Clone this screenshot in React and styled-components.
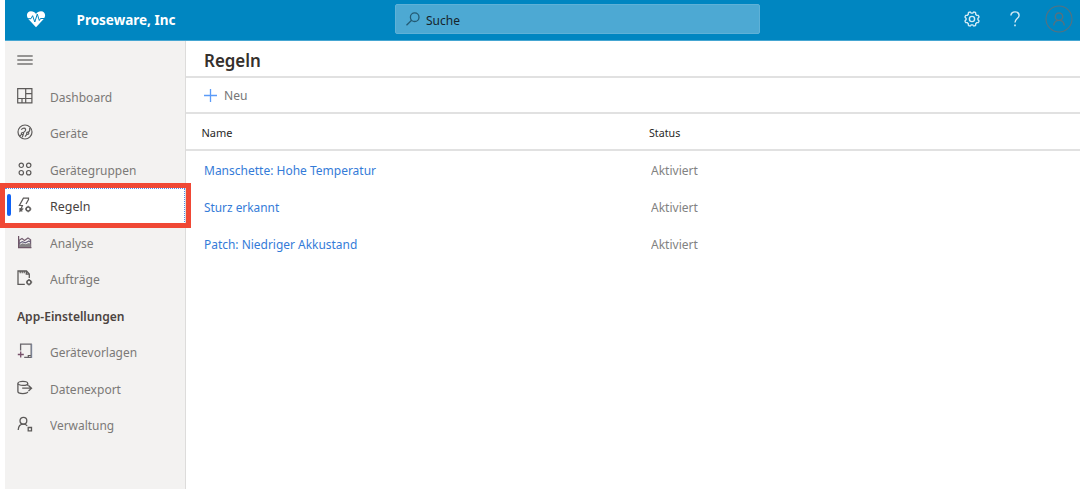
import React from "react";
import styled, { createGlobalStyle } from "styled-components";

const GlobalStyle = createGlobalStyle`
  * { box-sizing: border-box; }
  body {
    margin: 0;
    background: #fff;
    overflow: hidden;
    font-family: "Noto Sans", "Open Sans", sans-serif;
    font-size: 13px;
  }
`;

const Page = styled.div`
  position: relative;
  display: flex;
  flex-direction: column;
  height: 489px;
  padding-left: 5px;
`;

const Header = styled.header`
  display: flex;
  align-items: center;
  height: 41px;
  flex: none;
  padding-left: 21px;
  background: #0086c1;
  border-bottom: 1px solid #45a6d2;
`;

const Brand = styled.div`
  width: 319px;
  margin-left: 30.5px;
  color: #fff;
  font-size: 13.5px;
  font-weight: 700;
  white-space: nowrap;
`;

const SearchBox = styled.div`
  display: flex;
  align-items: center;
  width: 365px;
  height: 30px;
  margin: -3px 0 0 -0.5px;
  padding-left: 10px;
  gap: 6px;
  border: 1px solid #5fb1d7;
  border-radius: 2px;
  background: #4da9d3;
  color: #16242b;
  font-size: 12.5px;
`;

const SearchText = styled.span`
  display: inline-block;
  padding-top: 3px;
  transform: scaleX(0.96);
  transform-origin: left center;
`;

const HeaderActions = styled.div`
  display: flex;
  align-items: center;
  margin: -2px 0 0 204px;
`;

const Action = styled.span`
  display: flex;
  margin-right: ${(p) => p.$gap || 0}px;
`;

const Body = styled.div`
  display: flex;
  flex: 1;
  min-height: 0;
`;

const Sidebar = styled.nav`
  display: flex;
  flex-direction: column;
  width: 181px;
  flex: none;
  background: #f3f2f1;
  border-right: 1px solid #dddcdb;
`;

const MenuButton = styled.div`
  display: flex;
  align-items: center;
  height: 37.5px;
  flex: none;
  padding-left: 12px;
`;

const NavItem = styled.div`
  position: relative;
  display: flex;
  align-items: center;
  height: 36.5px;
  flex: none;
  padding-left: 12px;
  gap: 17px;
  color: ${(p) => (p.$active ? "#48423f" : "#7b7977")};
  background: ${(p) => (p.$active ? "#fff" : "transparent")};
`;

const FocusRing = styled.span`
  position: absolute;
  inset: 0 0 1px 0;
  border: 1px dotted #4a8cf0;
  border-left: none;
`;

const ActiveMark = styled.span`
  position: absolute;
  left: 2px;
  top: 6px;
  width: 4px;
  height: 22px;
  border-radius: 2px;
  background: #0f62f5;
`;

const Label = styled.span`
  display: inline-block;
  transform: scaleX(${(p) => p.$scale || 0.925});
  transform-origin: left center;
  white-space: nowrap;
`;

const NavIcon = styled.span`
  display: flex;
  margin-top: -2px;
`;

const SectionTitle = styled.div`
  display: flex;
  align-items: center;
  height: 36.5px;
  flex: none;
  padding-left: 12px;
  color: #4c4441;
  font-weight: 600;
`;

const Main = styled.main`
  display: flex;
  flex-direction: column;
  flex: 1;
`;

const TitleBar = styled.h1`
  display: flex;
  align-items: center;
  height: 37px;
  margin: 0;
  padding: 2px 0 0 18px;
  border-bottom: 2px solid #e1e1e1;
  color: #35302c;
  font-size: 18px;
  font-weight: 600;
`;

const Toolbar = styled.div`
  display: flex;
  align-items: center;
  height: 36px;
  padding-left: 18px;
  gap: 7px;
  border-bottom: 2px solid #e1e1e1;
  color: #767676;
`;

const TableHead = styled.div`
  display: grid;
  grid-template-columns: 447px 1fr;
  align-items: center;
  height: 37px;
  padding: 2px 0 0 15.5px;
  border-bottom: 2px solid #e1e1e1;
  color: #292827;
  font-size: 11px;
`;

const TableRow = styled.div`
  display: grid;
  grid-template-columns: 447px 1fr;
  align-items: center;
  justify-items: start;
  height: 37px;
  padding: 0 0 0 18px;
  color: #828282;
`;

const RuleLink = styled(Label)`
  color: #347bd8;
`;

const Highlight = styled.div`
  position: absolute;
  left: 0;
  top: 183px;
  width: 191px;
  height: 45px;
  border: 5px solid #f04835;
`;

const Svg = styled.svg`
  flex: none;
`;

const Icon = ({ size = 16, color = "#5c5a59", sw = 1.2, children }) => (
  <Svg width={size} height={size} viewBox={`0 0 ${size} ${size}`} fill="none" stroke={color} strokeWidth={sw}>
    {children}
  </Svg>
);

const icons = {
  dashboard: <path d="M.7.7h14.2v14.2H.7zM8.7.7v14.2M.7 10.5h14.2M8.7 5.6h6.2M5 10.5v4.4" />,
  devices: (
    <>
      <circle cx="8" cy="8" r="7" />
      <path d="M2.6 12.4 4.8 10.2M6.2 8.9 8 7.2c1.2-1.3.6-3-1-3-1.200 0-1.900.6-2.800 1.500M6.200 10.800l-1 2.600M8 12.600l2-2.400M11.300 8.400c1.500-1.300 1.900-2.700 1.300-4.400" />
      <circle cx="5.500" cy="9.600" r="1.100" />
      <circle cx="10.700" cy="9.300" r="1.100" />
    </>
  ),
  groups: (
    <>
      <circle cx="4.300" cy="4.300" r="2.200" />
      <circle cx="11.700" cy="4.300" r="2.200" />
      <circle cx="4.300" cy="11.700" r="2.200" />
      <circle cx="11.700" cy="11.700" r="2.200" />
    </>
  ),
  rules: (
    <>
      <path d="M9 7 11.500 2.500V1.200H6.400L2.400 8.500h3L3.300 13.800l3-2.300M3 11v3h2.500" />
      <circle cx="11.200" cy="12" r="2" strokeWidth="1.500" />
      <path d="M11.200 8.800v1M11.200 14.200v1M8 12h1M13.400 12h1" />
    </>
  ),
  analytics: (
    <>
      <path d="M1.600 2v11.600h12.800" stroke="#6b5365" />
      <path d="M2.200 6.200 5 4.500l2.500 2L11 4l2.600 1.800v7H2.200z" stroke="#755f70" />
      <path d="M2.300 11 5.500 9.200 8.500 10.200 12 9l1.700 1v3H2.300z" fill="#858386" stroke="none" />
      <path d="m2.300 9.600 3-2 3 1.300L12 7l1.700 1.300" stroke="#67607d" />
    </>
  ),
  jobs: (
    <>
      <path d="M7.800 14.300H1V1h8.500l2.800 3v4M9.300 1v3.200h3" strokeWidth="1.300" />
      <path d="M3.200 1v2.200M5.200 1v2.200M7.200 1v2.200" />
      <circle cx="12" cy="12.200" r="2" strokeWidth="1.500" />
      <path d="M12 9v1M12 14.400v1M9 12.200h.8M14.200 12.200h1" />
    </>
  ),
  templates: (
    <>
      <path d="M3.600 7.500V1.200h10.600v13.200H7.200" stroke="#69656b" strokeWidth="1.300" />
      <path d="M.8 11.500h6M3.700 8.500v6" stroke="#77516a" strokeWidth="1.300" />
      <path d="M11.300 14.300v-1.800h2.600" />
      <path d="M14.800 1v14" stroke="#7b8fae" strokeWidth=".6" />
    </>
  ),
  exportData: (
    <>
      <ellipse cx="5.800" cy="3.400" rx="4.900" ry="2" />
      <path d="M.9 3.400v8.200c0 1.200 2.200 2 4.900 2s4.900-.8 4.900-1.800M10.700 3.400v2.400M5.200 8.200h9M11.500 5.500l3 2.700-3 2.700" strokeWidth="1.300" />
    </>
  ),
  admin: (
    <>
      <circle cx="6.400" cy="4.700" r="3.400" strokeWidth="1.300" />
      <path d="M1.200 14c.2-3.500 2.200-5.800 5.200-5.800 1.600 0 2.900.6 3.800 1.700" strokeWidth="1.300" />
      <path d="M11.200 11.500h3.300v3.300h-3.300z" strokeWidth="1.300" />
    </>
  ),
};

const mainNav = [
  { id: "dashboard", label: "Dashboard" },
  { id: "devices", label: "Geräte" },
  { id: "groups", label: "Gerätegruppen", scale: 0.918 },
  { id: "rules", label: "Regeln", active: true, scale: 0.96 },
  { id: "analytics", label: "Analyse" },
  { id: "jobs", label: "Aufträge", scale: 0.935 },
];

const settingsNav = [
  { id: "templates", label: "Gerätevorlagen", scale: 0.918 },
  { id: "exportData", label: "Datenexport" },
  { id: "admin", label: "Verwaltung", scale: 0.918 },
];

const rules = [
  { name: "Manschette: Hohe Temperatur", scale: 0.923 },
  { name: "Sturz erkannt", scale: 0.912 },
  { name: "Patch: Niedriger Akkustand", scale: 0.919 },
];

const gearPath = (() => {
  const pts = [];
  for (let i = 0; i <= 96; i++) {
    const a = (i / 96) * Math.PI * 2;
    const r = 6.6 + 0.7 * Math.tanh(2.5 * Math.cos(8 * a + Math.PI));
    pts.push(`${(8 + r * Math.cos(a)).toFixed(2)} ${(8 + r * Math.sin(a)).toFixed(2)}`);
  }
  return `M${pts.join("L")}Z`;
})();

const NavEntry = ({ id, label, active, scale }) => (
  <NavItem $active={active}>
    {active && <FocusRing />}
    {active && <ActiveMark />}
    <NavIcon>
      <Icon>{icons[id]}</Icon>
    </NavIcon>
    <Label $scale={scale}>{label}</Label>
  </NavItem>
);

const Logo = styled.svg`
  flex: none;
  margin-top: -3px;
`;

export default function App() {
  return (
    <Page>
      <GlobalStyle />
      <Header>
        <Logo width="20" height="20" viewBox="0 0 20 20">
          <path d="M10 18.200 2.300 10C-.4 6.700 1 2.200 5 2.200c2.200 0 3.900 1 5 2.800 1.100-1.800 2.800-2.800 5-2.800 4 0 5.400 4.500 2.700 7.800z" fill="#fff" />
          <path d="M1 9.700h4l1.600-3 2.200 6.300L11.300 5l2 6.500 1.200-2H19" fill="none" stroke="#0086c1" strokeWidth="1" />
        </Logo>
        <Brand>Proseware, Inc</Brand>
        <SearchBox>
          <Icon size={14} color="#245a73" sw={1.300}>
            <circle cx="8.700" cy="5.200" r="4.300" />
            <path d="M5.600 8.300.5 13.300" />
          </Icon>
          <SearchText>Suche</SearchText>
        </SearchBox>
        <HeaderActions>
          <Action $gap={29}>
            <Icon color="#d3ebf5" sw={1.400}>
              <path d={gearPath} />
              <circle cx="8" cy="8" r="2.600" />
            </Icon>
          </Action>
          <Action $gap={24}>
            <Svg width="12" height="16" viewBox="0 0 12 16" fill="none" stroke="#d3ebf5" strokeWidth="1.400">
              <path d="M1.900 4.600C1.900 2.300 3.600.9 6 .9s4.100 1.400 4.100 3.600c0 3-4.100 3.300-4.100 7" />
              <path d="M6 13.600v1.700" strokeWidth="1.600" />
            </Svg>
          </Action>
          <Action>
            <Icon size={28} color="#56717f" sw={1.100}>
              <circle cx="14" cy="14" r="13" />
              <circle cx="14" cy="11.700" r="3.700" strokeWidth="1.400" />
              <path d="M8.700 20.500c.3-3.200 2.400-5.100 5.300-5.100s5 1.900 5.300 5.100" strokeWidth="1.400" />
            </Icon>
          </Action>
        </HeaderActions>
      </Header>
      <Body>
        <Sidebar>
          <MenuButton>
            <Icon sw={1.300} color="#777574">
              <path d="M.3 4h15.400M.3 8h15.400M.3 12h15.400" />
            </Icon>
          </MenuButton>
          {mainNav.map((n) => (
            <NavEntry key={n.id} {...n} />
          ))}
          <SectionTitle>
            <Label $scale={0.93}>App-Einstellungen</Label>
          </SectionTitle>
          {settingsNav.map((n) => (
            <NavEntry key={n.id} {...n} />
          ))}
        </Sidebar>
        <Main>
          <TitleBar>
            <Label $scale={0.94}>Regeln</Label>
          </TitleBar>
          <Toolbar>
            <Icon size={13} color="#5b9bf8" sw={1.300}>
              <path d="M0 6.500h13M6.500 0v13" />
            </Icon>
            <Label $scale={0.93}>Neu</Label>
          </Toolbar>
          <TableHead>
            <Label $scale={1}>Name</Label>
            <Label $scale={0.97}>Status</Label>
          </TableHead>
          {rules.map(({ name, scale }) => (
            <TableRow key={name}>
              <RuleLink $scale={scale}>{name}</RuleLink>
              <Label>Aktiviert</Label>
            </TableRow>
          ))}
        </Main>
      </Body>
      <Highlight />
    </Page>
  );
}
